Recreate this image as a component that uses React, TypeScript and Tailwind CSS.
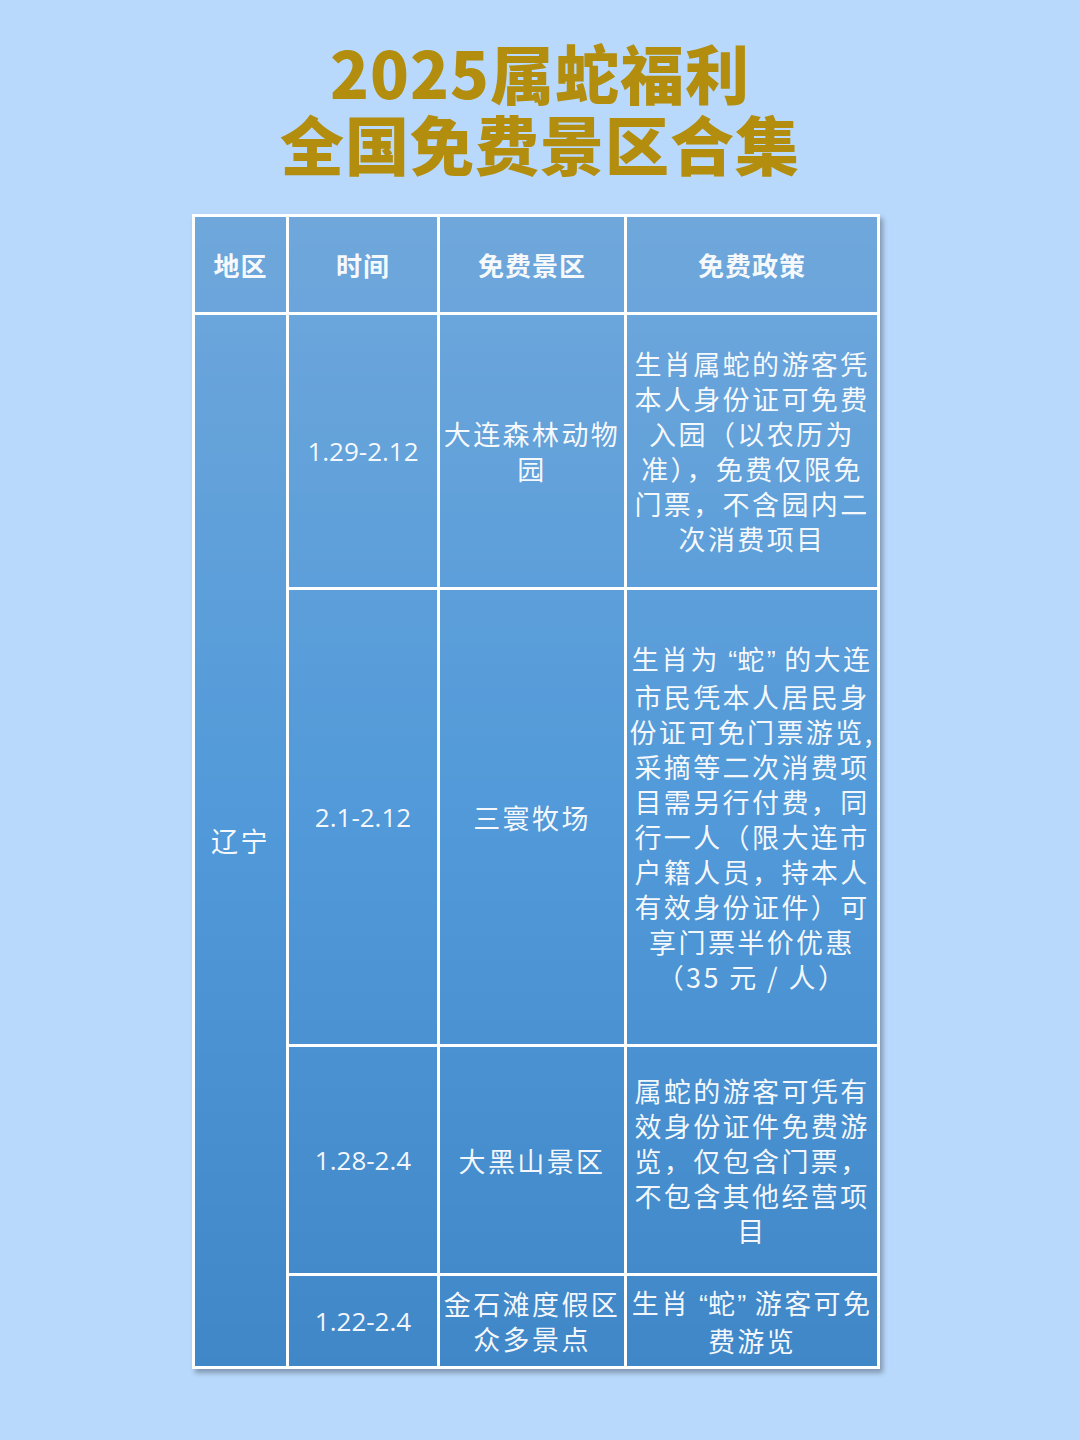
const CJK = '"Noto Sans CJK SC", "Noto Sans", sans-serif';
const NUM = '"Open Sans", "Noto Sans CJK SC", sans-serif';

type Row = {
  time: string;
  spot: string[];
  policy: string[];
  height: string;
};

const rows: Row[] = [
  {
    time: '1.29-2.12',
    spot: ['大连森林动物', '园'],
    policy: ['生肖属蛇的游客凭', '本人身份证可免费', '入园（以农历为', '准），免费仅限免', '门票，不含园内二', '次消费项目'],
    height: 'h-[275px]',
  },
  {
    time: '2.1-2.12',
    spot: ['三寰牧场'],
    policy: [
      '生肖为 “蛇” 的大连',
      '市民凭本人居民身',
      '份证可免门票游览,',
      '采摘等二次消费项',
      '目需另行付费，同',
      '行一人（限大连市',
      '户籍人员，持本人',
      '有效身份证件）可',
      '享门票半价优惠',
      '（35 元 / 人）',
    ],
    height: 'h-[457px]',
  },
  {
    time: '1.28-2.4',
    spot: ['大黑山景区'],
    policy: ['属蛇的游客可凭有', '效身份证件免费游', '览，仅包含门票，', '不包含其他经营项', '目'],
    height: 'h-[229px]',
  },
  {
    time: '1.22-2.4',
    spot: ['金石滩度假区', '众多景点'],
    policy: ['生肖 “蛇” 游客可免', '费游览'],
    height: 'h-[93px]',
  },
];

// curly quotes are narrow in the reference, so draw them in a Latin face
function Text({ line }: { line: string }) {
  const parts = line.split(/([“”])/);
  return (
    <span className="whitespace-nowrap">
      {parts.map((p, i) =>
        p === '“' || p === '”' ? (
          <span key={i} className="tracking-normal" style={{ fontFamily: '"Liberation Sans", sans-serif' }}>
            {p}
          </span>
        ) : (
          p
        ),
      )}
    </span>
  );
}

function Lines({ lines }: { lines: string[] }) {
  return (
    <div className="flex flex-col items-center">
      {lines.map((l, i) => (
        <Text key={i} line={l} />
      ))}
    </div>
  );
}

export default function App() {
  return (
    <div className="min-h-[1440px] w-full bg-[#b9d9fc] pt-[36px]" style={{ fontFamily: CJK }}>
      <h1 className="text-center text-[64px] leading-[71px] font-black text-[#b28d0e] tracking-[1px]">
        2025属蛇福利
        <br />
        全国免费景区合集
      </h1>

      <table className="mt-[36px] ml-[192px] w-[685px] table-fixed border-collapse border-[3px] border-white bg-linear-to-b from-[#6fa7db] via-[#529ad9] to-[#4087c8] text-white/95 shadow-[3px_4px_5px_rgba(0,0,0,0.3)]">
        <colgroup>
          <col className="w-[94px]" />
          <col className="w-[151px]" />
          <col className="w-[187px]" />
          <col className="w-[253px]" />
        </colgroup>
        <thead>
          <tr className="h-[98px] text-[26px] font-bold tracking-[1px]">
            <th className="border-[3px] border-white">地区</th>
            <th className="border-[3px] border-white">时间</th>
            <th className="border-[3px] border-white">免费景区</th>
            <th className="border-[3px] border-white">免费政策</th>
          </tr>
        </thead>
        <tbody className="text-[27px] leading-[35px] tracking-[2.4px]">
          {rows.map((r, i) => (
            <tr key={i} className={r.height}>
              {i === 0 && (
                <td rowSpan={rows.length} className="border-[3px] border-white text-center align-middle">
                  辽宁
                </td>
              )}
              <td
                className="border-[3px] border-white text-center text-[26px] tracking-normal"
                style={{ fontFamily: NUM }}
              >
                {r.time}
              </td>
              <td className="border-[3px] border-white text-center">
                <Lines lines={r.spot} />
              </td>
              <td className="border-[3px] border-white text-center">
                <Lines lines={r.policy} />
              </td>
            </tr>
          ))}
        </tbody>
      </table>
    </div>
  );
}
